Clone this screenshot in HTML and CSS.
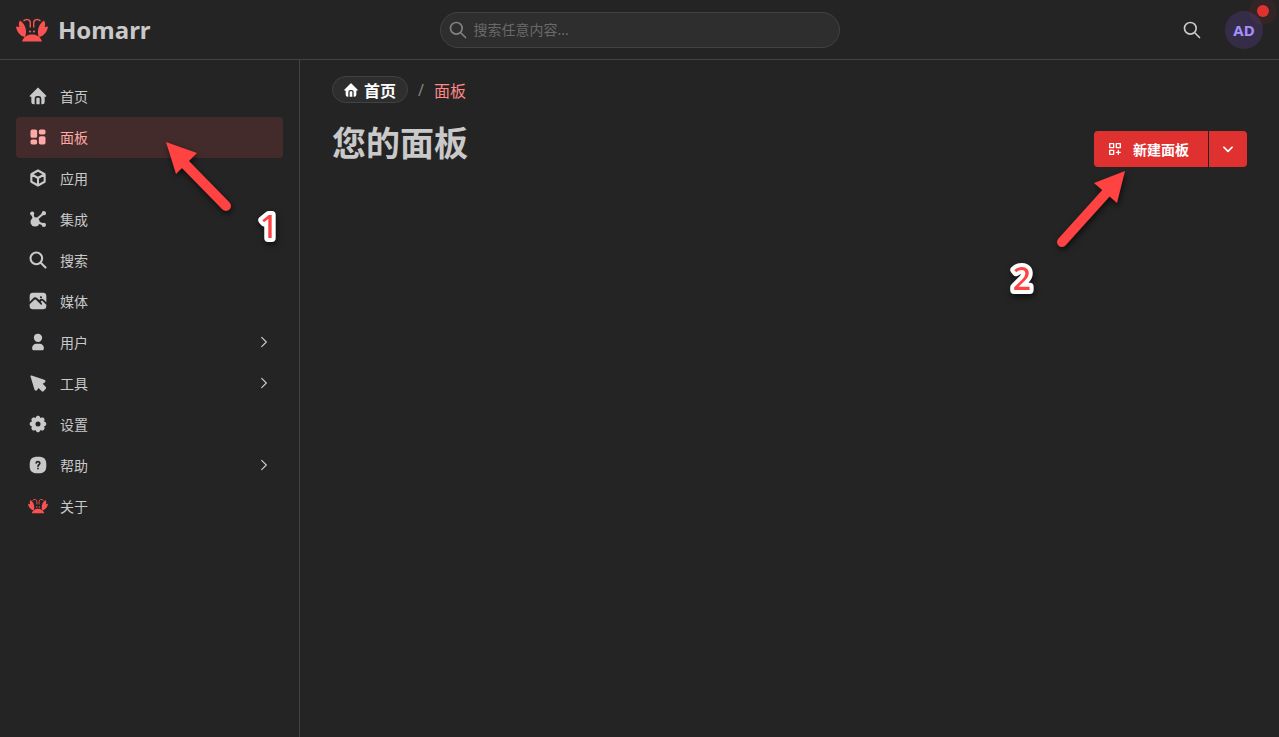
FILE: index.html
```html
<!DOCTYPE html>
<html lang="zh-CN">
<head>
    <meta charset="UTF-8">
    <meta name="viewport" content="width=device-width, initial-scale=1.0">
    <title>Homarr</title>
    <link rel="stylesheet" href="styles.css">
</head>
<body>
    <svg class="sprite" aria-hidden="true">
        <symbol id="logo" viewBox="0 0 32 24">
            <g fill="#fa5252">
                <path d="M6 23.500C7.500 19 11 16.500 16 16.500S24.500 19 26 23.500Z"/>
                <path d="M4 2.500C2.500 5 2.500 7 3.500 9L0 8.500C.5 13.500 4 18 9 19C11 14.500 10.500 7 4 2.500Z"/>
                <path d="M28 2.500C29.500 5 29.500 7 28.500 9L32 8.500C31.500 13.500 28 18 23 19C21 14.500 21.500 7 28 2.500Z"/>
                <circle cx="14" cy="13.500" r="1.100"/>
                <circle cx="18" cy="13.500" r="1.100"/>
            </g>
            <path d="M7.500 3C10 .5 14.300 1.200 14.300 5V9.500M24.500 3C22 .5 17.700 1.200 17.700 5V9.500" fill="none" stroke="#fa5252" stroke-width="1.400"/>
        </symbol>
        <symbol id="home" viewBox="0 0 24 24">
            <path fill="currentColor" d="M12.707 2.293l9 9c.63 .63 .184 1.707 -.707 1.707h-1v6a3 3 0 0 1 -3 3h-1v-7a3 3 0 0 0 -2.824 -2.995l-.176 -.005h-2a3 3 0 0 0 -3 3v7h-1a3 3 0 0 1 -3 -3v-6h-1c-.89 0 -1.337 -1.077 -.707 -1.707l9 -9a1 1 0 0 1 1.414 0m.293 11.707a1 1 0 0 1 1 1v7h-4v-7a1 1 0 0 1 .883 -.993l.117 -.007z"/>
        </symbol>
        <symbol id="dashboard" viewBox="0 0 24 24">
            <path fill="currentColor" d="M9 3a2 2 0 0 1 2 2v6a2 2 0 0 1 -2 2h-4a2 2 0 0 1 -2 -2v-6a2 2 0 0 1 2 -2zm0 12a2 2 0 0 1 2 2v2a2 2 0 0 1 -2 2h-4a2 2 0 0 1 -2 -2v-2a2 2 0 0 1 2 -2zm10 -4a2 2 0 0 1 2 2v6a2 2 0 0 1 -2 2h-4a2 2 0 0 1 -2 -2v-6a2 2 0 0 1 2 -2zm0 -8a2 2 0 0 1 2 2v2a2 2 0 0 1 -2 2h-4a2 2 0 0 1 -2 -2v-2a2 2 0 0 1 2 -2z"/>
        </symbol>
        <symbol id="box" viewBox="0 0 24 24">
            <path class="line" d="M12 3l8 4.500v9l-8 4.500l-8 -4.500v-9zM12 12l8 -4.500M12 12v9M12 12l-8 -4.500"/>
        </symbol>
        <symbol id="affiliate" viewBox="0 0 24 24">
            <path class="line" d="M5 5.500l3 9l10.500 -9M8 14.500l10.500 4"/>
            <g fill="currentColor">
                <circle cx="8.500" cy="15.500" r="5.500"/>
                <circle cx="5" cy="5.500" r="2.500"/>
                <circle cx="19" cy="5" r="2.600"/>
                <circle cx="19" cy="19" r="2.600"/>
            </g>
        </symbol>
        <symbol id="search" viewBox="0 0 24 24">
            <path class="line" d="M10 3a7 7 0 1 0 0 14a7 7 0 1 0 0 -14M21 21l-6 -6"/>
        </symbol>
        <symbol id="photo" viewBox="0 0 24 24">
            <path fill="currentColor" d="M6 2H18A4 4 0 0 1 22 6V13.600L18.700 10.300C17 8.800 15 9.300 13.800 10.800L10.700 8.300C9.200 7 7 7.500 5.900 9.100L2 13V6A4 4 0 0 1 6 2ZM2 15.800L7.300 10.700C8.100 9.900 8.800 9.900 9.600 10.600L15.300 16.300A1 1 0 0 0 16.700 14.900L15.300 12.500C16.100 11.500 16.900 11.500 17.700 12.200L22 16.500V18A4 4 0 0 1 18 22H6A4 4 0 0 1 2 18Z"/>
            <circle cx="15.500" cy="7.500" r="1.300" fill="#242424"/>
        </symbol>
        <symbol id="user" viewBox="0 0 24 24">
            <path fill="currentColor" d="M12 2a5 5 0 1 1 -5 5l.004 -.217a5 5 0 0 1 4.996 -4.783zM14 14a5 5 0 0 1 5 5v1a2 2 0 0 1 -2 2h-10a2 2 0 0 1 -2 -2v-1a5 5 0 0 1 5 -5h4z"/>
        </symbol>
        <symbol id="pointer" viewBox="0 0 24 24">
            <path fill="currentColor" d="M3.040 4.300l4.700 15.500c.5 1.600 2.400 1.900 3.300 .6l1.600 -2.400l3.600 3.500c.8 .8 1.900 .8 2.700 0l2.200 -2.200c.8 -.8 .8 -1.900 0 -2.700l-3.500 -3.600l2.500 -1.600c1.300 -.9 1 -2.800 -.6 -3.300l-15.250 -5.100c-.8 -.25 -1.500 .5 -1.250 1.300z"/>
        </symbol>
        <symbol id="settings" viewBox="0 0 24 24">
            <path fill="currentColor" fill-rule="evenodd" d="M14.647 4.081a.724 .724 0 0 0 1.080 .448c2.439 -1.485 5.230 1.305 3.745 3.744a.724 .724 0 0 0 .447 1.080c2.775 .673 2.775 4.620 0 5.294a.724 .724 0 0 0 -.448 1.080c1.485 2.439 -1.305 5.230 -3.744 3.745a.724 .724 0 0 0 -1.080 .447c-.673 2.775 -4.620 2.775 -5.294 0a.724 .724 0 0 0 -1.080 -.448c-2.439 1.485 -5.230 -1.305 -3.745 -3.744a.724 .724 0 0 0 -.447 -1.080c-2.775 -.673 -2.775 -4.620 0 -5.294a.724 .724 0 0 0 .448 -1.080c-1.485 -2.439 1.305 -5.230 3.744 -3.745a.722 .722 0 0 0 1.080 -.447c.673 -2.775 4.620 -2.775 5.294 0zM12 9a3 3 0 1 0 0 6a3 3 0 0 0 0 -6z"/>
        </symbol>
        <symbol id="help" viewBox="0 0 24 24">
            <path fill="currentColor" d="M12 2c7.500 0 10 2.500 10 10s-2.500 10 -10 10s-10 -2.500 -10 -10s2.500 -10 10 -10z"/>
            <path d="M9.800 9.400C10.200 7.300 14.300 7.500 14.200 10C14.100 11.700 12 11.700 12 13.500M12 16v.5" fill="none" stroke="#242424" stroke-width="2" stroke-linecap="round"/>
        </symbol>
        <symbol id="chevron-right" viewBox="0 0 24 24">
            <path class="line" d="M8 4l8 8l-8 8"/>
        </symbol>
        <symbol id="chevron-down" viewBox="0 0 24 24">
            <path class="line" d="M5 9l7 7l7 -7"/>
        </symbol>
        <symbol id="new-board" viewBox="0 0 24 24">
            <path class="line" d="M4 4h6v6h-6zM14 4h6v6h-6zM4 14h6v6h-6zM14 17h6M17 14v6"/>
        </symbol>
    </svg>

    <header class="header">
        <a class="brand" href="#">
            <svg class="brand-logo"><use href="#logo"/></svg>
            <span>Homarr</span>
        </a>
        <label class="search">
            <svg class="icon"><use href="#search"/></svg>
            <input type="search" placeholder="搜索任意内容..." aria-label="搜索">
        </label>
        <div class="actions">
            <button class="icon-button" type="button" aria-label="搜索">
                <svg class="icon"><use href="#search"/></svg>
            </button>
            <button class="avatar" type="button">AD<span class="indicator"></span></button>
        </div>
    </header>

    <div class="layout">
        <nav class="sidebar">
            <a class="nav-link" href="#"><svg class="icon"><use href="#home"/></svg>首页</a>
            <a class="nav-link active" href="#"><svg class="icon"><use href="#dashboard"/></svg>面板</a>
            <a class="nav-link" href="#"><svg class="icon"><use href="#box"/></svg>应用</a>
            <a class="nav-link" href="#"><svg class="icon"><use href="#affiliate"/></svg>集成</a>
            <a class="nav-link" href="#"><svg class="icon"><use href="#search"/></svg>搜索</a>
            <a class="nav-link" href="#"><svg class="icon"><use href="#photo"/></svg>媒体</a>
            <a class="nav-link" href="#"><svg class="icon"><use href="#user"/></svg>用户<svg class="chevron"><use href="#chevron-right"/></svg></a>
            <a class="nav-link" href="#"><svg class="icon"><use href="#pointer"/></svg>工具<svg class="chevron"><use href="#chevron-right"/></svg></a>
            <a class="nav-link" href="#"><svg class="icon"><use href="#settings"/></svg>设置</a>
            <a class="nav-link" href="#"><svg class="icon"><use href="#help"/></svg>帮助<svg class="chevron"><use href="#chevron-right"/></svg></a>
            <a class="nav-link" href="#"><svg class="icon"><use href="#logo"/></svg>关于</a>

            <svg class="marker marker-one" viewBox="0 0 80 80">
                <path d="M17 20L60 64" stroke="#ff4242" stroke-width="10" stroke-linecap="round"/>
                <path d="M0 0L31 11L10 32Z" fill="#ff4242"/>
                <text x="103" y="96">1</text>
            </svg>
        </nav>

        <main class="main">
            <div class="breadcrumbs">
                <a class="crumb-home" href="#"><svg><use href="#home"/></svg>首页</a>
                <span class="separator">/</span>
                <a class="crumb" href="#">面板</a>
            </div>
            <div class="title-row">
                <h1>您的面板</h1>
                <div class="button-group">
                    <button class="new-board" type="button"><svg><use href="#new-board"/></svg>新建面板</button>
                    <button class="more" type="button" aria-label="更多"><svg><use href="#chevron-down"/></svg></button>
                </div>
            </div>

            <svg class="marker marker-two" viewBox="0 0 80 80">
                <path d="M58 20L12 71" stroke="#ff4242" stroke-width="10" stroke-linecap="round"/>
                <path d="M75 0L44 12L67 32Z" fill="#ff4242"/>
                <text x="-28" y="119">2</text>
            </svg>
        </main>
    </div>
</body>
</html>
```

FILE: styles.css
```css
* {
    box-sizing: border-box;
}
body {
    margin: 0;
    min-height: 100vh;
    display: flex;
    flex-direction: column;
    background-color: #242424;
    color: #c9c9c9;
    font-family: "Noto Sans", "Noto Sans CJK SC", sans-serif;
    font-size: 16px;
}
a {
    color: inherit;
    text-decoration: none;
}
button {
    border: none;
    padding: 0;
    background: none;
    color: inherit;
    font-family: inherit;
    cursor: pointer;
}
svg {
    stroke-width: 2;
}
.sprite {
    position: absolute;
    width: 0;
    height: 0;
}
.line {
    fill: none;
    stroke: currentColor;
    stroke-width: inherit;
    stroke-linecap: round;
    stroke-linejoin: round;
}
.icon {
    width: 20px;
    height: 20px;
    flex-shrink: 0;
}

/* Header */
.header {
    height: 60px;
    padding: 0 16px;
    display: grid;
    grid-template-columns: 1fr minmax(0, 400px) 1fr;
    align-items: center;
    border-bottom: 1px solid #424242;
}
.brand {
    display: flex;
    align-items: center;
    gap: 10px;
    font-size: 24px;
    font-weight: bold;
    line-height: 32px;
}
.brand-logo {
    width: 32px;
    height: 24px;
}
.search {
    height: 36px;
    padding: 0 7px;
    display: flex;
    align-items: center;
    gap: 6px;
    border: 1px solid #424242;
    border-radius: 18px;
    background-color: #2e2e2e;
    color: #828282;
}
.search input {
    flex: 1;
    min-width: 0;
    padding: 0;
    border: none;
    outline: none;
    background: none;
    color: #c9c9c9;
    font-family: inherit;
    font-size: 14px;
}
.search input::placeholder {
    color: #696969;
}
.actions {
    display: flex;
    justify-content: flex-end;
    align-items: center;
    gap: 23px;
}
.icon-button {
    display: flex;
}
.avatar {
    position: relative;
    width: 38px;
    height: 38px;
    border-radius: 50%;
    background-color: #352d48;
    color: #a98eff;
    font-size: 15px;
    font-weight: bold;
    line-height: 38px;
}
.indicator {
    position: absolute;
    top: -6px;
    right: -6px;
    width: 12px;
    height: 12px;
    border-radius: 50%;
    background-color: #e03131;
    box-shadow: 0 0 0 8px rgba(224, 49, 49, 0.08);
}

/* Sidebar */
.layout {
    flex: 1;
    display: grid;
    grid-template-columns: 300px 1fr;
}
.sidebar {
    position: relative;
    padding: 16px;
    border-right: 1px solid #424242;
}
.nav-link {
    height: 41px;
    padding: 0 12px 2px;
    display: flex;
    align-items: center;
    gap: 12px;
    border-radius: 4px;
    font-size: 14px;
}
.nav-link .icon {
    stroke-width: 2.5;
}
.nav-link.active {
    background-color: #442b2b;
    color: #ffa8a8;
}
.chevron {
    width: 14px;
    height: 14px;
    margin-left: auto;
}

/* Main */
.main {
    position: relative;
    padding: 16px 32px;
}
.breadcrumbs {
    margin-bottom: 16px;
    display: flex;
    align-items: center;
    gap: 10px;
}
.crumb-home {
    height: 27px;
    padding: 0 11px 0 10px;
    display: flex;
    align-items: center;
    gap: 5px;
    border: 1px solid #424242;
    border-radius: 14px;
    background-color: #2e2e2e;
    color: #fff;
    font-weight: bold;
}
.crumb-home svg {
    width: 16px;
    height: 16px;
}
.separator {
    color: #828282;
}
.crumb {
    color: #ff8787;
}
.title-row {
    display: flex;
    justify-content: space-between;
    align-items: flex-end;
}
h1 {
    margin: 0;
    font-size: 34px;
    line-height: 48px;
}
.button-group {
    display: flex;
    gap: 1px;
    color: #fff;
}
.new-board,
.more {
    height: 36px;
    display: flex;
    align-items: center;
    justify-content: center;
    background-color: #e03131;
    font-size: 14px;
    font-weight: bold;
}
.new-board {
    padding: 0 19px 0 13px;
    gap: 10px;
    border-radius: 4px 0 0 4px;
}
.new-board svg {
    width: 16px;
    height: 16px;
}
.more {
    width: 38px;
    border-radius: 0 4px 4px 0;
}
.more svg {
    width: 14px;
    height: 14px;
    stroke-width: 3;
}

/* Step markers */
.marker {
    position: absolute;
    width: 80px;
    height: 80px;
    overflow: visible;
    pointer-events: none;
    filter: drop-shadow(1px 3px 3px rgba(0, 0, 0, 0.6));
}
.marker text {
    fill: #ff4242;
    stroke: #fff;
    stroke-width: 8px;
    stroke-linejoin: round;
    paint-order: stroke;
    text-anchor: middle;
    font-size: 32px;
    font-weight: 500;
}
.marker-one {
    top: 82px;
    left: 166px;
}
.marker-two {
    top: 111px;
    right: 149px;
}
```
